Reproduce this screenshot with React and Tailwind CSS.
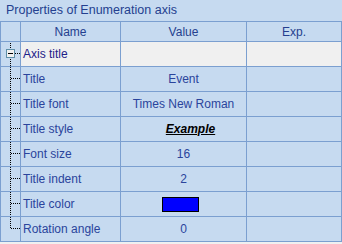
import React from "react";

const ROWS = [
  { name: "Title", value: "Event" },
  { name: "Title font", value: "Times New Roman" },
  { name: "Title style", value: "example" },
  { name: "Font size", value: "16" },
  { name: "Title indent", value: "2" },
  { name: "Title color", value: "color" },
  { name: "Rotation angle", value: "0" },
];

function TreeLines({ kind }) {
  // kind: "root" | "mid" | "last"
  return (
    <svg width="19" height="24" viewBox="0 0 19 24" className="block">
      {kind === "root" ? (
        <>
          <line x1="9.5" y1="1" x2="9.5" y2="7" stroke="#000" strokeDasharray="1 1" />
          <line x1="9.5" y1="17" x2="9.5" y2="24" stroke="#000" strokeDasharray="1 1" />
          <rect x="5.5" y="7.5" width="8" height="8" fill="#f0f0f0" stroke="#5f8fa8" />
          <line x1="7" y1="11.5" x2="12" y2="11.5" stroke="#000" />
          <line x1="14" y1="11.5" x2="19" y2="11.5" stroke="#000" strokeDasharray="1 1" />
        </>
      ) : (
        <>
          <line
            x1="9.5"
            y1="0"
            x2="9.5"
            y2={kind === "last" ? 12 : 24}
            stroke="#000"
            strokeDasharray="1 1"
          />
          <line x1="10" y1="11.5" x2="19" y2="11.5" stroke="#000" strokeDasharray="1 1" />
        </>
      )}
    </svg>
  );
}

function Value({ v }) {
  if (v === "example")
    return <span className="ml-[14px] font-bold italic underline text-black">Example</span>;
  if (v === "color")
    return <span className="mr-[7px] block w-[37px] h-[15px] bg-[#0000ff] border border-black" />;
  return <span>{v}</span>;
}

export default function App() {
  return (
    <div
      className="w-[342px] h-[244px] bg-[#f0f0f0] text-[12px] overflow-hidden"
      style={{ fontFamily: '"Liberation Sans", Arial, sans-serif' }}
    >
      {/* Title bar */}
      <div className="h-[21px] bg-[#c6daf0] pl-[6px] leading-[21px] text-[12.5px] text-[#243f8f]">
        Properties of Enumeration axis
      </div>

      {/* Header */}
      <div className="flex h-[21px] bg-[#c6daf0] border-y border-[#7b9fd0] text-[#243f8f]">
        <div className="w-[21px] border-x border-[#7b9fd0]" />
        <div className="w-[100px] border-r border-[#7b9fd0] flex items-center justify-center">Name</div>
        <div className="w-[126px] border-r border-[#7b9fd0] flex items-center justify-center">Value</div>
        <div className="w-[95px] border-r border-[#7b9fd0] flex items-center justify-center">Exp.</div>
      </div>

      {/* Root row */}
      <div className="flex h-[25px] bg-[#f0f0f0] border-b border-[#7b9fd0] text-[#1d2188]">
        <div className="w-[21px] border-x border-[#7b9fd0] bg-[#c6daf0]">
          <TreeLines kind="root" />
        </div>
        <div className="w-[100px] border-r border-[#7b9fd0] flex items-center pl-[2px]">Axis title</div>
        <div className="w-[126px] border-r border-[#7b9fd0]" />
        <div className="w-[95px] border-r border-[#7b9fd0]" />
      </div>

      {ROWS.map((r, i) => (
        <div
          key={r.name}
          className="flex h-[25px] bg-[#c6daf0] border-b border-[#7b9fd0] text-[#2a449c]"
        >
          <div className="w-[21px] border-x border-[#7b9fd0]">
            <TreeLines kind={i === ROWS.length - 1 ? "last" : "mid"} />
          </div>
          <div className="w-[100px] border-r border-[#7b9fd0] flex items-center pl-[2px]">{r.name}</div>
          <div className="w-[126px] border-r border-[#7b9fd0] flex items-center justify-center">
            <Value v={r.value} />
          </div>
          <div className="w-[95px] border-r border-[#7b9fd0]" />
        </div>
      ))}
    </div>
  );
}
